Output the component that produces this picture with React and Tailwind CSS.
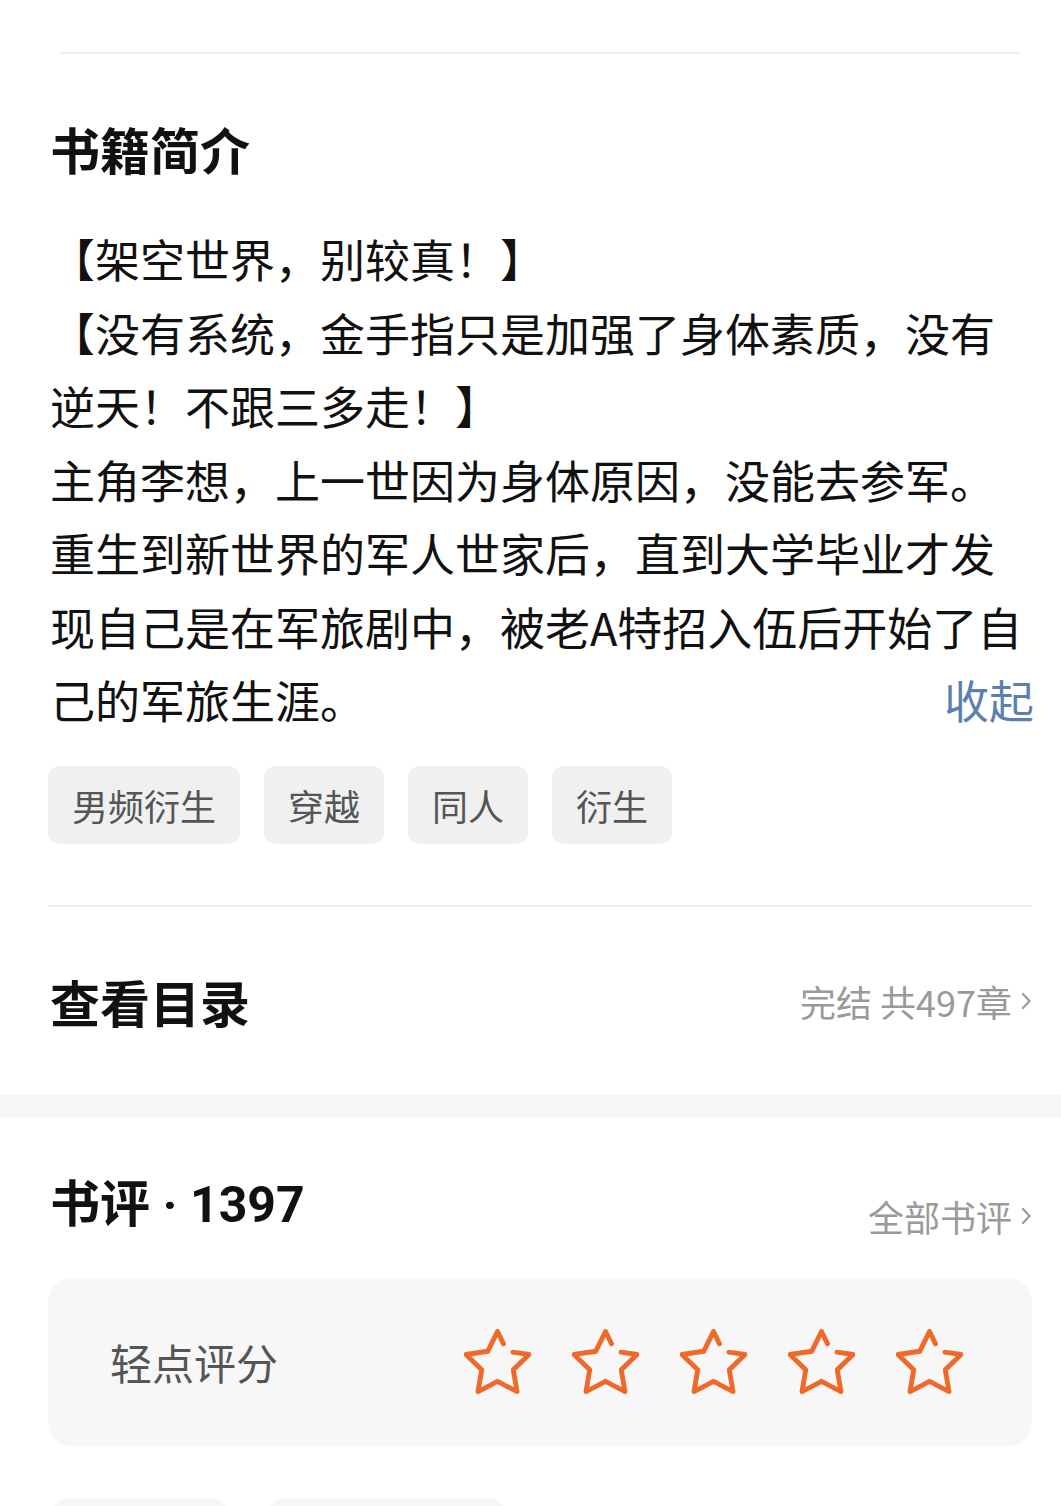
import React from 'react'

const intro = [
  '【架空世界，别较真！】',
  '【没有系统，金手指只是加强了身体素质，没有',
  '逆天！不跟三多走！】',
  '主角李想，上一世因为身体原因，没能去参军。',
  '重生到新世界的军人世家后，直到大学毕业才发',
  '现自己是在军旅剧中，被老A特招入伍后开始了自',
]

const tags = ['男频衍生', '穿越', '同人', '衍生']

function Chevron(){
  return (
    <svg width="12" height="20" viewBox="0 0 12 20" fill="none" className="ml-[8px]">
      <path d="M3 3l6.5 7L3 17" stroke="#9a9a9a" strokeWidth="2.2" strokeLinecap="round" strokeLinejoin="round" />
    </svg>
  )
}

function Star(){
  return (
    <svg width="67" height="66" viewBox="1.4 1.2 21.2 20.9" fill="none">
      <path
        d="M16.9 8.52L22 9.27L17 14.14L18.18 21.02L12 17.77L5.82 21.02L7 14.14L2 9.27L8.91 8.26L12 2L13.9 5.9"
        stroke="#f0692a" strokeWidth="1.55" strokeLinecap="round" strokeLinejoin="round"
      />
    </svg>
  )
}

export default function App(){
  return (
    <div className="w-full h-[1506px] overflow-hidden bg-white pt-[52px] text-[#111]" style={{fontFamily:'"Noto Sans CJK SC", "Noto Sans", sans-serif'}}>
      <div className="ml-[60px] mr-[41px] h-[2px] bg-[#ececec]" />

      <div className="pl-[48px] pr-[29px]">
        <h2 className="mt-[59px] pl-[2px] h-[70px] leading-[70px] text-[50px] font-bold">书籍简介</h2>

        <div className="mt-[39px] pl-[2px] text-[45px] leading-[73.5px]">
          {intro.map(line => <div key={line} className="whitespace-nowrap">{line}</div>)}
          <div className="flex justify-between">
            <span>己的军旅生涯。</span>
            <span className="text-[#5a7fb0] -mr-[2px]">收起</span>
          </div>
        </div>

        <div className="mt-[29px] flex gap-[24px]">
          {tags.map(t => (
            <span key={t} className="h-[78px] px-[24px] flex items-center rounded-[12px] bg-[#f0f0f0] text-[36px] text-[#555]">{t}</span>
          ))}
        </div>

        <div className="mt-[61px] h-[2px] bg-[#efefef]" />

        <div className="mt-[44px] h-[100px] flex items-center justify-between">
          <h2 className="pl-[2px] text-[50px] leading-[70px] font-bold">查看目录</h2>
          <span className="flex items-center text-[36px] text-[#9a9a9a]">完结 共497章<Chevron /></span>
        </div>
      </div>

      <div className="mt-[44px] h-[23px] bg-[#f6f6f6]" />

      <div className="pl-[48px] pr-[29px]">
        <div className="mt-[35px] h-[100px] flex items-center justify-between">
          <h2 className="pl-[2px] text-[50px] leading-[70px] font-bold">
            书评<span style={{fontFamily:'Roboto, "Noto Sans", sans-serif'}}> · 1397</span>
          </h2>
          <span className="mt-[26px] flex items-center text-[36px] text-[#9a9a9a]">全部书评<Chevron /></span>
        </div>

        <div className="mt-[25px] h-[168px] rounded-[24px] bg-[#f7f7f7] flex items-center pl-[62px]">
          <span className="w-[354px] text-[42px] text-[#555]">轻点评分</span>
          <div className="flex gap-[41px]">
            {[1,2,3,4,5].map(i => <Star key={i} />)}
          </div>
        </div>

        <div className="mt-[52px] flex gap-[32px]">
          <div className="w-[184px] h-[80px] rounded-t-[24px] bg-[#f6f6f6]" />
          <div className="w-[246px] h-[80px] rounded-t-[24px] bg-[#f6f6f6]" />
        </div>
      </div>
    </div>
  )
}
